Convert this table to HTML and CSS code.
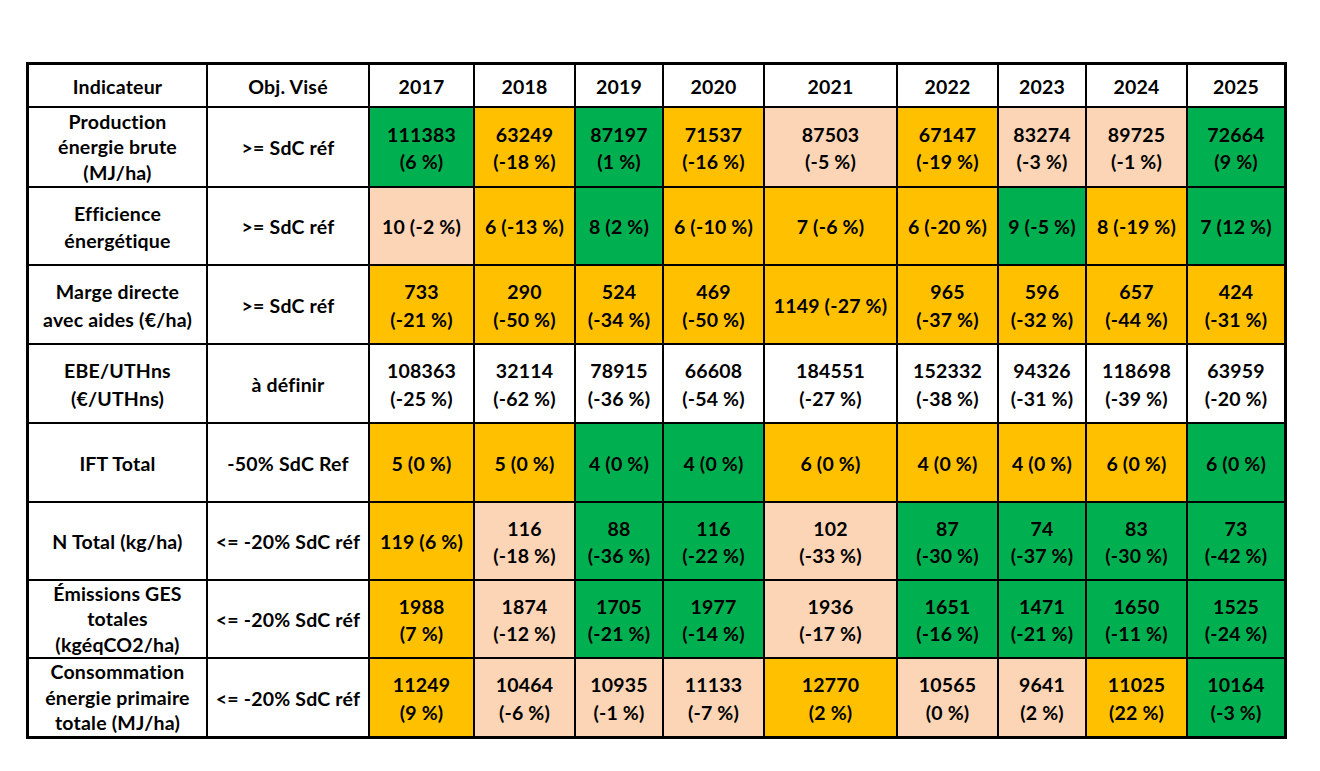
FILE: index.html
```html
<!DOCTYPE html>
<html lang="fr">
<head>
<meta charset="utf-8">
<title>Indicateurs</title>
<link rel="stylesheet" href="styles.css">
</head>
<body>
<div class="page">
  <div class="grid">
    <div class="c w">Indicateur</div>
    <div class="c w">Obj. Visé</div>
    <div class="c w">2017</div>
    <div class="c w">2018</div>
    <div class="c w">2019</div>
    <div class="c w">2020</div>
    <div class="c w">2021</div>
    <div class="c w">2022</div>
    <div class="c w">2023</div>
    <div class="c w">2024</div>
    <div class="c w">2025</div>

    <div class="c w three">Production<br>énergie brute<br>(MJ/ha)</div>
    <div class="c w">&gt;= SdC réf</div>
    <div class="c g">111383<br>(6&nbsp;%)</div>
    <div class="c o">63249<br>(-18&nbsp;%)</div>
    <div class="c g">87197<br>(1&nbsp;%)</div>
    <div class="c o">71537<br>(-16&nbsp;%)</div>
    <div class="c p">87503<br>(-5&nbsp;%)</div>
    <div class="c o">67147<br>(-19&nbsp;%)</div>
    <div class="c p">83274<br>(-3&nbsp;%)</div>
    <div class="c p">89725<br>(-1&nbsp;%)</div>
    <div class="c g">72664<br>(9&nbsp;%)</div>

    <div class="c w">Efficience<br>énergétique</div>
    <div class="c w">&gt;= SdC réf</div>
    <div class="c p">10 (-2&nbsp;%)</div>
    <div class="c o">6 (-13&nbsp;%)</div>
    <div class="c g">8 (2&nbsp;%)</div>
    <div class="c o">6 (-10&nbsp;%)</div>
    <div class="c o">7 (-6&nbsp;%)</div>
    <div class="c o">6 (-20&nbsp;%)</div>
    <div class="c g">9 (-5&nbsp;%)</div>
    <div class="c o">8 (-19&nbsp;%)</div>
    <div class="c g">7 (12&nbsp;%)</div>

    <div class="c w">Marge directe<br>avec aides (€/ha)</div>
    <div class="c w">&gt;= SdC réf</div>
    <div class="c o">733<br>(-21&nbsp;%)</div>
    <div class="c o">290<br>(-50&nbsp;%)</div>
    <div class="c o">524<br>(-34&nbsp;%)</div>
    <div class="c o">469<br>(-50&nbsp;%)</div>
    <div class="c o">1149 (-27&nbsp;%)</div>
    <div class="c o">965<br>(-37&nbsp;%)</div>
    <div class="c o">596<br>(-32&nbsp;%)</div>
    <div class="c o">657<br>(-44&nbsp;%)</div>
    <div class="c o">424<br>(-31&nbsp;%)</div>

    <div class="c w">EBE/UTHns<br>(€/UTHns)</div>
    <div class="c w">à définir</div>
    <div class="c w">108363<br>(-25&nbsp;%)</div>
    <div class="c w">32114<br>(-62&nbsp;%)</div>
    <div class="c w">78915<br>(-36&nbsp;%)</div>
    <div class="c w">66608<br>(-54&nbsp;%)</div>
    <div class="c w">184551<br>(-27&nbsp;%)</div>
    <div class="c w">152332<br>(-38&nbsp;%)</div>
    <div class="c w">94326<br>(-31&nbsp;%)</div>
    <div class="c w">118698<br>(-39&nbsp;%)</div>
    <div class="c w">63959<br>(-20&nbsp;%)</div>

    <div class="c w">IFT Total</div>
    <div class="c w">-50% SdC Ref</div>
    <div class="c o">5 (0&nbsp;%)</div>
    <div class="c o">5 (0&nbsp;%)</div>
    <div class="c g">4 (0&nbsp;%)</div>
    <div class="c g">4 (0&nbsp;%)</div>
    <div class="c o">6 (0&nbsp;%)</div>
    <div class="c o">4 (0&nbsp;%)</div>
    <div class="c o">4 (0&nbsp;%)</div>
    <div class="c o">6 (0&nbsp;%)</div>
    <div class="c g">6 (0&nbsp;%)</div>

    <div class="c w">N Total (kg/ha)</div>
    <div class="c w">&lt;= -20% SdC réf</div>
    <div class="c o">119 (6&nbsp;%)</div>
    <div class="c p">116<br>(-18&nbsp;%)</div>
    <div class="c g">88<br>(-36&nbsp;%)</div>
    <div class="c g">116<br>(-22&nbsp;%)</div>
    <div class="c p">102<br>(-33&nbsp;%)</div>
    <div class="c g">87<br>(-30&nbsp;%)</div>
    <div class="c g">74<br>(-37&nbsp;%)</div>
    <div class="c g">83<br>(-30&nbsp;%)</div>
    <div class="c g">73<br>(-42&nbsp;%)</div>

    <div class="c w three">Émissions GES<br>totales<br>(kgéqCO2/ha)</div>
    <div class="c w">&lt;= -20% SdC réf</div>
    <div class="c o">1988<br>(7&nbsp;%)</div>
    <div class="c p">1874<br>(-12&nbsp;%)</div>
    <div class="c g">1705<br>(-21&nbsp;%)</div>
    <div class="c g">1977<br>(-14&nbsp;%)</div>
    <div class="c p">1936<br>(-17&nbsp;%)</div>
    <div class="c g">1651<br>(-16&nbsp;%)</div>
    <div class="c g">1471<br>(-21&nbsp;%)</div>
    <div class="c g">1650<br>(-11&nbsp;%)</div>
    <div class="c g">1525<br>(-24&nbsp;%)</div>

    <div class="c w three">Consommation<br>énergie primaire<br>totale (MJ/ha)</div>
    <div class="c w">&lt;= -20% SdC réf</div>
    <div class="c o">11249<br>(9&nbsp;%)</div>
    <div class="c p">10464<br>(-6&nbsp;%)</div>
    <div class="c p">10935<br>(-1&nbsp;%)</div>
    <div class="c p">11133<br>(-7&nbsp;%)</div>
    <div class="c o">12770<br>(2&nbsp;%)</div>
    <div class="c p">10565<br>(0&nbsp;%)</div>
    <div class="c p">9641<br>(2&nbsp;%)</div>
    <div class="c o">11025<br>(22&nbsp;%)</div>
    <div class="c g">10164<br>(-3&nbsp;%)</div>
  </div>
</div>
</body>
</html>
```
FILE: styles.css
```css
html, body {
  margin: 0;
  padding: 0;
  background: #ffffff;
}

.page {
  padding: 62px 0 0 26px;
}

.grid {
  display: grid;
  width: max-content;
  grid-template-columns: 177px 160px 103px 99px 86px 99px 131px 99px 86px 99px 96px;
  grid-template-rows: 41px 78px 76px 77px 77px 77px 76px 76px 77px;
  gap: 2px;
  padding: 3px;
  background: #000000;
  font-family: Lato, "Liberation Sans", sans-serif;
  font-weight: 700;
  font-size: 19.5px;
  letter-spacing: 0.2px;
  line-height: 27.5px;
  color: #000000;
}

.c {
  display: flex;
  align-items: center;
  justify-content: center;
  text-align: center;
  overflow: hidden;
  white-space: nowrap;
  padding-top: 2px;
  box-sizing: border-box;
}

.c.three {
  line-height: 25.5px;
  padding-top: 0;
}

.w { background: #ffffff; }
.g { background: #00b050; }
.o { background: #ffc000; }
.p { background: #fbd5b5; }
```
